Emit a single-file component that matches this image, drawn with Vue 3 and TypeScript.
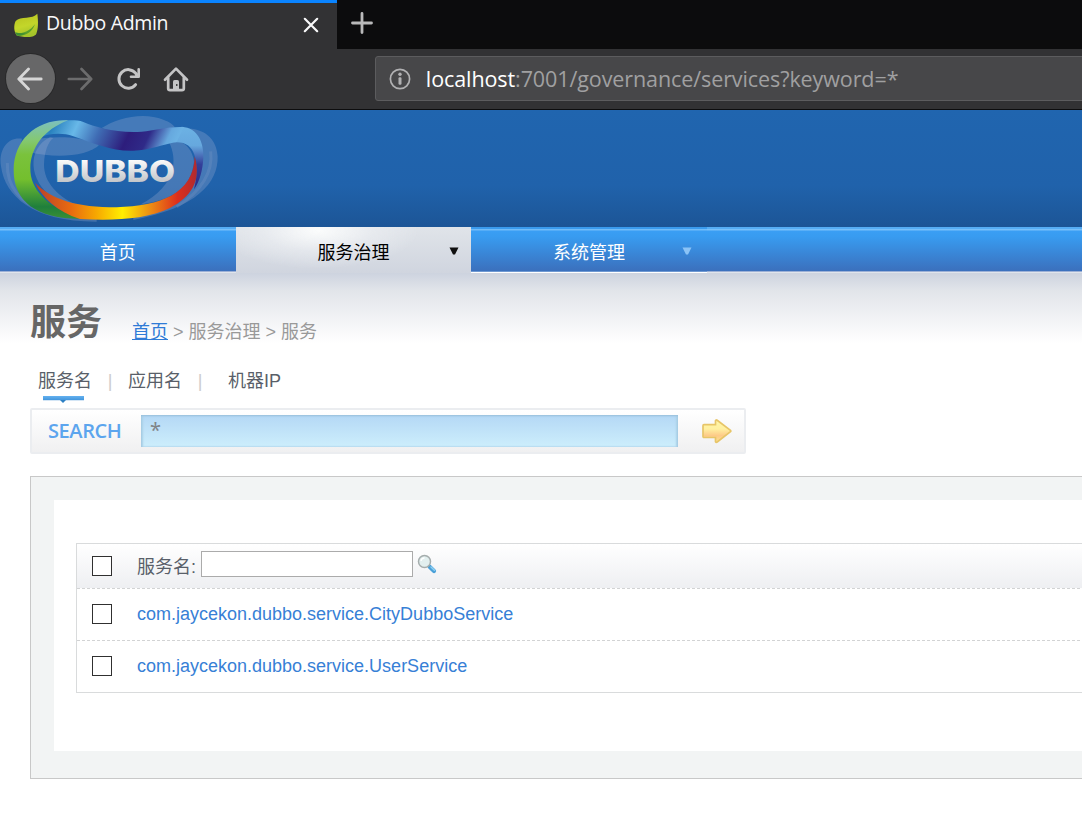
<script setup lang="ts">
import { ref } from 'vue'

interface NavItem {
  label: string
  active: boolean
  menu: boolean
}

const navItems: NavItem[] = [
  { label: '首页', active: false, menu: false },
  { label: '服务治理', active: true, menu: true },
  { label: '系统管理', active: false, menu: true },
]

const services = ref([
  { name: 'com.jaycekon.dubbo.service.CityDubboService', checked: false },
  { name: 'com.jaycekon.dubbo.service.UserService', checked: false },
])
const allChecked = ref(false)
const filter = ref('')
const keyword = ref('*')
</script>

<template>
  <div class="window">
    <div class="tabstrip">
      <div class="tab">
        <svg class="leaf" width="26" height="26" viewBox="0 0 78 78">
          <defs>
            <linearGradient id="leafFill" x1="0" y1="0" x2="0.3" y2="1">
              <stop offset="0" stop-color="#b5bf1e" />
              <stop offset="0.6" stop-color="#c3d62a" />
              <stop offset="1" stop-color="#a5c42a" />
            </linearGradient>
          </defs>
          <path d="M73 2C76 25 76 48 70 62C66 71 48 73 34 72L12 68C3 58 1 38 8 24C22 8 58 20 73 2Z" fill="url(#leafFill)" />
          <path d="M8 62C32 62 54 52 66 34C58 56 42 66 20 69Z" fill="#5a9f2b" />
          <path d="M6 58C16 61 28 62 38 60C30 66 22 69 12 68Z" fill="#3f8f33" />
        </svg>
        <span class="tab-title">Dubbo Admin</span>
        <svg class="tab-close" width="16" height="16" viewBox="0 0 16 16">
          <path d="M1.8 1.8L14.2 14.2M14.2 1.8L1.8 14.2" stroke="#f9f9fa" stroke-width="2.2" stroke-linecap="round" />
        </svg>
      </div>
      <svg class="tab-new" width="22" height="22" viewBox="0 0 22 22">
        <path d="M11 1.5V20.5M1.5 11H20.5" stroke="#b9b9ba" stroke-width="2.8" stroke-linecap="round" />
      </svg>
    </div>

    <div class="toolbar">
      <div class="back">
        <svg width="26" height="24" viewBox="0 0 26 24" fill="none" stroke="#d6d6d6" stroke-width="2.8" stroke-linecap="round" stroke-linejoin="round">
          <path d="M24.2 12H2M11.5 2L1.8 12L11.5 22" />
        </svg>
      </div>
      <svg class="forward" width="26" height="24" viewBox="0 0 26 24" fill="none" stroke="#6c6c6d" stroke-width="2.6" stroke-linecap="round" stroke-linejoin="round">
        <path d="M1.8 12H24M14.5 2L24.2 12L14.5 22" />
      </svg>
      <svg class="reload" width="24" height="24" viewBox="0 0 24 24" fill="none" stroke="#c4c4c5" stroke-width="3" stroke-linecap="round" stroke-linejoin="round">
        <path d="M18.6 17.6A9.3 9.3 0 1 1 18.6 6.2L20.5 9" />
        <path d="M21.7 2.2V9.8H14" stroke-width="2.6" />
        <path d="M22 5V9.8H17Z" fill="#c4c4c5" stroke="none" />
      </svg>
      <svg class="home" width="26" height="26" viewBox="0 0 26 26" fill="none" stroke="#c4c4c5" stroke-width="2.7" stroke-linecap="round" stroke-linejoin="round">
        <path d="M2 13.8L13 2.6L24 13.8" />
        <path d="M5.2 12V22.5Q5.2 24.2 7 24.2H19Q20.8 24.2 20.8 22.5V12" />
        <path d="M10 24V15.6Q10 14 11.6 14H14.4Q16 14 16 15.6V24Z" fill="#c4c4c5" stroke="none" />
        <rect x="13" y="18" width="1.5" height="2" fill="#444" stroke="none" />
      </svg>
      <div class="address">
        <svg class="info" width="22" height="22" viewBox="0 0 22 22">
          <circle cx="11" cy="11" r="9.6" fill="none" stroke="#b1b1b3" stroke-width="1.7" />
          <circle cx="11" cy="6.3" r="1.7" fill="#b1b1b3" />
          <rect x="9.5" y="9.3" width="3" height="7.4" rx="1.2" fill="#b1b1b3" />
        </svg>
        <span class="host">localhost</span><span class="path">:7001/governance/services?keyword=*</span>
      </div>
    </div>

    <header class="banner">
      <svg width="240" height="117" viewBox="0 6 720 351">
        <defs>
          <linearGradient id="greenBand" x1="0" y1="0" x2="0" y2="1">
            <stop offset="0" stop-color="#7cc0c0" />
            <stop offset="0.2" stop-color="#84c873" />
            <stop offset="0.35" stop-color="#7ac23c" />
            <stop offset="0.6" stop-color="#74bf2e" />
            <stop offset="0.88" stop-color="#1f7f3c" />
            <stop offset="1" stop-color="#3a8f35" />
          </linearGradient>
          <linearGradient id="blueBand" x1="0" y1="0" x2="1" y2="0.1">
            <stop offset="0" stop-color="#3f9bd0" />
            <stop offset="0.12" stop-color="#2a82bf" />
            <stop offset="0.28" stop-color="#68b8e8" />
            <stop offset="0.45" stop-color="#3f6cb4" />
            <stop offset="0.66" stop-color="#2d1d7c" />
            <stop offset="0.8" stop-color="#2f2a88" />
            <stop offset="0.94" stop-color="#66a8de" />
            <stop offset="1" stop-color="#6cb2e4" />
          </linearGradient>
          <linearGradient id="rightBand" x1="0" y1="0" x2="0" y2="1">
            <stop offset="0" stop-color="#6cb2e4" />
            <stop offset="0.3" stop-color="#66a8de" />
            <stop offset="0.6" stop-color="#33409a" />
            <stop offset="1" stop-color="#2d2a86" />
          </linearGradient>
          <linearGradient id="warmBand" x1="0" y1="0" x2="1" y2="0">
            <stop offset="0" stop-color="#b8402a" />
            <stop offset="0.22" stop-color="#e96a10" />
            <stop offset="0.38" stop-color="#f7a800" />
            <stop offset="0.54" stop-color="#ffee00" />
            <stop offset="0.7" stop-color="#ee9412" />
            <stop offset="0.88" stop-color="#dd2f1c" />
            <stop offset="1" stop-color="#b02a30" />
          </linearGradient>
          <linearGradient id="wordFill" x1="0" y1="0" x2="0" y2="1">
            <stop offset="0.2" stop-color="#fafafa" />
            <stop offset="0.8" stop-color="#c3c6ca" />
          </linearGradient>
        </defs>
        <g fill="#a9b4d6" fill-opacity="0.27">
          <path d="M66 92C20 85 -5 130 3 175C15 265 100 342 290 341L290 325C150 320 60 270 45 200Z" />
          <path d="M545 62C600 58 648 80 653 145C655 225 590 300 400 336L400 325C520 300 604 240 604 150Z" />
          <path d="M305 60C350 30 430 10 490 35C510 42 520 50 525 58L425 74C380 78 340 74 305 60Z" />
          <path d="M150 88C80 120 85 220 160 270C195 290 230 296 250 298C170 270 132 220 132 170C133 130 145 100 160 90Z" />
          <path d="M508 104C530 150 535 230 420 290C520 275 574 240 582 160C578 130 560 105 535 100Z" />
          <path d="M92 96C150 86 220 80 300 108C265 148 160 150 90 133Z" />
        </g>
        <path d="M22 165C20 235 60 285 130 308M632 130C640 190 605 250 530 296" fill="none" stroke="#8fa3cf" stroke-opacity="0.22" stroke-width="9" />
        <path d="M545 56C595 60 612 105 610 150C608 185 600 220 582 244C592 205 594 170 583 140C575 115 555 100 523 103Z" fill="url(#rightBand)" />
        <path d="M215 37C165 34 125 55 115 90C145 75 190 74 218 84C285 107 335 130 400 128C450 127 490 108 530 102L552 57C500 55 465 68 425 71C350 76 285 57 250 42C240 38 225 37 215 37Z" fill="url(#blueBand)" />
        <path d="M205 37C110 32 42 95 41 185C40 280 110 332 240 332C140 295 90 245 91 180C92 120 130 65 205 37Z" fill="url(#greenBand)" />
        <path d="M105 224C155 275 230 298 350 298C480 294 582 258 584 145C606 220 572 268 510 300C440 334 340 339 240 333C170 310 128 270 105 224Z" fill="url(#warmBand)" />
        <text x="166" y="222" textLength="359" lengthAdjust="spacingAndGlyphs" class="wordmark">DUBBO</text>
      </svg>
    </header>

    <nav class="nav">
      <div v-for="item in navItems" :key="item.label" class="nav-item" :class="{ active: item.active, menu: item.menu }">
        <span>{{ item.label }}</span>
        <svg v-if="item.menu" class="caret" width="10" height="8" viewBox="0 0 10 8">
          <path d="M0.5 0.5H9.5L6 7.5H4Z" fill="currentColor" />
        </svg>
      </div>
    </nav>

    <main class="content">
      <div class="heading">
        <h1>服务</h1>
        <div class="crumbs"><a>首页</a> &gt; 服务治理 &gt; 服务</div>
      </div>

      <div class="modes">
        <span class="mode selected">服务名</span>
        <span class="bar">|</span>
        <span class="mode">应用名</span>
        <span class="bar">|</span>
        <span class="mode last">机器IP</span>
      </div>

      <div class="search">
        <span class="search-label">SEARCH</span>
        <input v-model="keyword" class="search-input" type="text" />
        <svg class="go" width="32" height="26" viewBox="0 0 32 26">
          <defs>
            <linearGradient id="goFill" x1="0" y1="0" x2="0" y2="1">
              <stop offset="0" stop-color="#fff6a8" />
              <stop offset="0.4" stop-color="#fff0a0" />
              <stop offset="0.7" stop-color="#fdca88" />
              <stop offset="1" stop-color="#ffe38e" />
            </linearGradient>
          </defs>
          <path d="M3 6.7H14.5V2.6Q15 1.5 16.2 2.3L29.5 12.3Q30.2 13 29.5 13.7L16.2 24Q15 24.8 14.5 23.6V19.5H3Q2 19.5 2 18.5V7.7Q2 6.7 3 6.7Z" fill="url(#goFill)" stroke="#e7c568" stroke-width="1.7" />
        </svg>
      </div>

      <div class="panel">
        <div class="sheet">
          <div class="table">
            <div class="row head">
              <input v-model="allChecked" type="checkbox" class="check" />
              <span class="head-label">服务名:</span>
              <input v-model="filter" type="text" class="filter" />
              <svg class="lens" width="20" height="20" viewBox="0 0 20 20">
                <path d="M12.6 12.8L17 17" stroke="#4aa0d8" stroke-width="4.2" stroke-linecap="round" />
                <path d="M14 13L17.4 16.3" stroke="#8fd0f3" stroke-width="1.5" stroke-linecap="round" />
                <circle cx="7.5" cy="7.5" r="6" fill="#e2efef" stroke="#a5adad" stroke-width="1.5" />
                <path d="M4 7Q4.5 4 7.5 4" fill="none" stroke="#fff" stroke-width="1.3" />
              </svg>
            </div>
            <div v-for="service in services" :key="service.name" class="row">
              <input v-model="service.checked" type="checkbox" class="check" />
              <a class="service">{{ service.name }}</a>
            </div>
          </div>
        </div>
      </div>
    </main>
  </div>
</template>

<style>
body {
  margin: 0;
  overflow: hidden;
}
</style>

<style scoped>
.window {
  width: 1082px;
  height: 838px;
  overflow: hidden;
  background: #fff;
  font-family: "Liberation Sans", "Noto Sans CJK SC", sans-serif;
  font-size: 18px;
  color: #595f69;
}
svg {
  display: block;
  flex: none;
}
.tabstrip {
  display: flex;
  height: 49px;
  background: #0c0c0d;
}
.tab {
  display: flex;
  align-items: flex-start;
  box-sizing: border-box;
  width: 337px;
  border-top: 3px solid #0a84ff;
  background: #323234;
}
.leaf {
  margin: 10px 0 0 13px;
}
.tab-title {
  flex: 1;
  margin: 5px 0 0 7px;
  font-family: "Open Sans", sans-serif;
  font-size: 19.5px;
  line-height: 29px;
  letter-spacing: -0.35px;
  color: #f9f9fa;
}
.tab-close {
  margin: 14px 18px 0 0;
}
.tab-new {
  margin: 12px 0 0 14px;
}
.toolbar {
  display: flex;
  align-items: center;
  box-sizing: border-box;
  height: 61px;
  padding-bottom: 1px;
  border-bottom: 1px solid #0d0d0e;
  background: #323234;
}
.back {
  display: flex;
  align-items: center;
  justify-content: center;
  width: 49px;
  height: 49px;
  margin-left: 6px;
  border-radius: 50%;
  background: #676768;
  box-shadow: 0 0 0 1px #29292a;
}
.forward {
  margin-left: 12px;
}
.reload {
  margin-left: 24px;
}
.home {
  margin-left: 22px;
}
.address {
  display: flex;
  align-items: center;
  box-sizing: border-box;
  width: 730px;
  height: 45px;
  margin: 0 -20px 0 186px;
  padding-left: 13px;
  border: 1px solid #5c5c5e;
  border-radius: 3px;
  background: #474749;
  font-family: "Open Sans", sans-serif;
  font-size: 21.5px;
  letter-spacing: -0.09px;
  white-space: nowrap;
}
.host {
  margin-left: 15px;
  color: #fff;
}
.path {
  color: #a0a0a1;
}
.banner {
  height: 117px;
  background: linear-gradient(#2065af, #2062ab 65%, #1c5596);
}
.wordmark {
  font-family: Inter, sans-serif;
  font-weight: 800;
  font-size: 90px;
  fill: url(#wordFill);
}
.nav {
  display: flex;
  height: 46px;
  background: linear-gradient(#56adf4 0, #56adf4 2px, #79c0f9 2px, #79c0f9 3px, #3a9ef4 4px, #389bf0 10px, #3b70bd 44px, #9cb0d6 44px, #9cb0d6 45px, #e0e4eb 45px);
}
.nav-item {
  position: relative;
  display: flex;
  align-items: center;
  justify-content: center;
  width: 235.6px;
  height: 46px;
  padding-top: 2px;
  box-sizing: border-box;
  color: #fff;
}
.nav-item.menu:not(.active) {
  background: linear-gradient(#3a9bee 0, #3a9bee 2px, #72bcf8 2px, #72bcf8 3px, #3a9ef4 4px, #389bf0 10px, #3b70bd 44px, #6f99d2 44px, #6f99d2 45px, #fff 45px);
}
.nav-item.active {
  background: radial-gradient(ellipse 100px 38px at 35% 8%, #fbfcfc, rgba(240, 242, 245, 0.5) 55%, rgba(220, 224, 231, 0)), linear-gradient(#e0e4e9, #d0d5df);
  color: #000;
}
.caret {
  position: absolute;
  right: 15px;
  top: 20px;
  color: #8bc3f6;
}
.active .caret {
  right: 12px;
  color: #101010;
}
.content {
  height: 565px;
  padding-left: 30px;
  background: linear-gradient(#cdd3df, #e2e5ea 18px, #fff 70px);
}
.heading {
  display: flex;
  height: 93px;
}
h1 {
  width: 102px;
  margin: 24px 0 0;
  font-size: 36px;
  line-height: 52px;
  color: #666;
}
.crumbs {
  margin-top: 46px;
  line-height: 26px;
  color: #999;
}
.crumbs a {
  color: #2f7bd6;
  text-decoration: underline;
}
.modes {
  display: flex;
  height: 42px;
  padding-left: 8px;
  line-height: 30px;
}
.mode.selected {
  position: relative;
}
.mode.selected::before {
  content: "";
  position: absolute;
  left: 5px;
  top: 30px;
  width: 41px;
  height: 4px;
  background: linear-gradient(#64b1f0, #4396dc);
  border-bottom: 1px solid #d4e6f6;
}
.mode.selected::after {
  content: "";
  position: absolute;
  left: 22px;
  top: 34px;
  border: 3px solid transparent;
  border-top-color: #2d80c4;
  border-bottom: 0;
}
.bar {
  width: 36px;
  text-align: center;
  color: #ccc;
}
.mode.last {
  margin-left: 10px;
}
.search {
  display: flex;
  align-items: center;
  box-sizing: border-box;
  width: 716px;
  height: 46px;
  border: 2px solid #ebedf0;
  border-radius: 2px;
  background: linear-gradient(#fff, #f0f0f1);
}
.search-label {
  width: 93px;
  padding: 0 0 2px 16px;
  font-family: "Open Sans", sans-serif;
  font-weight: 600;
  font-size: 20px;
  letter-spacing: -0.4px;
  color: #5ca5ee;
}
.search-input {
  box-sizing: border-box;
  width: 537px;
  height: 32px;
  margin: 0;
  padding: 0 0 4px 9px;
  border: 0;
  outline: 0;
  background: linear-gradient(#b4d8f5, #cdeefc);
  box-shadow: inset 0 1px 2px #98bfdc, inset -2px 0 2px #acd2e7, inset 2px 0 2px #acd2e7;
  font-family: "Noto Sans", sans-serif;
  font-size: 20px;
  color: #808487;
}
.go {
  margin-left: 22.5px;
}
.panel {
  box-sizing: border-box;
  width: 1072px;
  height: 303px;
  margin-top: 22px;
  padding: 23px 0 0 23px;
  border: 1px solid #c8c8c8;
  background: #f2f4f4;
}
.sheet {
  box-sizing: border-box;
  height: 251px;
  padding: 43px 0 0 22px;
  background: #fff;
}
.table {
  box-sizing: border-box;
  height: 150px;
  border: 1px solid #d9dbdc;
}
.row {
  display: flex;
  align-items: center;
  box-sizing: border-box;
  height: 52px;
  padding: 0 0 1px 15px;
  border-bottom: 1px dashed #d2d3d4;
}
.row:last-child {
  height: 51px;
  border-bottom: 0;
}
.head {
  height: 45px;
  padding-bottom: 0;
  background: linear-gradient(#fff, #eeeff2);
}
.check {
  appearance: none;
  box-sizing: border-box;
  width: 20px;
  height: 20px;
  margin: 0 25px 0 0;
  border: 1px solid #303030;
  background: #fff;
}
.head-label {
  width: 64px;
  padding-bottom: 3px;
}
.filter {
  box-sizing: border-box;
  width: 212px;
  height: 26px;
  margin: 0 4px 4px 0;
  padding: 0 3px;
  border: 1px solid #ababab;
  outline: 0;
  background: #fff;
}
.lens {
  margin-bottom: 5px;
}
.service {
  color: #3780d6;
}
</style>
